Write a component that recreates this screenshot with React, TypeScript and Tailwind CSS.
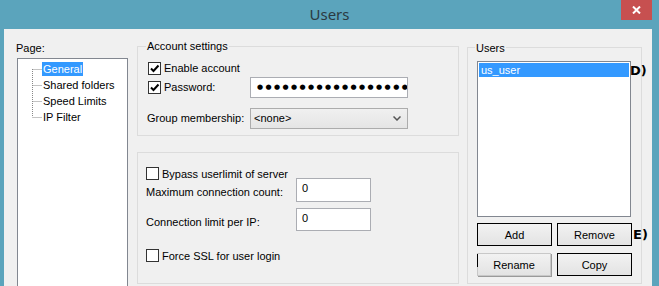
import React from "react";

const font = { fontFamily: '"Liberation Sans", Arial, sans-serif' };
const dots = { fontFamily: '"DejaVu Sans", sans-serif' };

function Check({ checked }: { checked?: boolean }) {
  return (
    <span className="flex h-[13px] w-[13px] shrink-0 items-center justify-center border border-[#333] bg-white">
      {checked && (
        <svg width="11" height="11" viewBox="0 0 11 11">
          <path d="M2 5.5 L4.5 8 L9.5 2.5" fill="none" stroke="#000" strokeWidth="2" />
        </svg>
      )}
    </span>
  );
}

function Btn({ label }: { label: string }) {
  return (
    <div className="flex h-[23px] w-[75px] items-center justify-center border border-black bg-gradient-to-b from-[#f2f2f2] to-[#e3e3e3] text-black">
      {label}
    </div>
  );
}

export default function App() {
  const treeItems = ["General", "Shared folders", "Speed Limits", "IP Filter"];
  return (
    <div
      className="flex h-[286px] w-[659px] flex-col overflow-hidden bg-[#5ba4bc] text-[11px] leading-[16px] text-black"
      style={font}
    >
      {/* title bar */}
      <div className="relative flex h-[29px] shrink-0 items-center justify-center">
        <span className="pb-[1px] text-[15px] text-[#2b3a42]" style={{ fontFamily: '"Noto Sans", sans-serif' }}>
          Users
        </span>
        <div className="absolute right-[7px] top-0 flex h-[20px] w-[31px] items-center justify-center bg-[#c75050]">
          <svg width="9" height="8" viewBox="0 0 9 8">
            <path d="M1 0.5 L8 7.5 M8 0.5 L1 7.5" stroke="#fff" strokeWidth="2" />
          </svg>
        </div>
      </div>

      {/* body */}
      <div className="ml-[4px] flex w-[648px] flex-1 bg-[#f0f0f0]">
        {/* page tree */}
        <div className="flex w-[133px] shrink-0 flex-col pt-[11px]">
          <div className="pl-[12px]">Page:</div>
          <div className="ml-[13px] mt-[2px] h-[240px] w-[111px] border border-[#828790] bg-white pt-[2px]">
            <div className="flex pl-[14px]">
              <svg width="10" height="64" className="shrink-0">
                <path
                  d="M0.5 8 V56 M0.5 8.5 H10 M0.5 24.5 H10 M0.5 40.5 H10 M0.5 56.5 H10"
                  stroke="#888"
                  strokeDasharray="1 1"
                  fill="none"
                />
              </svg>
              <div className="flex flex-col">
                {treeItems.map((t, i) => (
                  <div key={t} className="flex h-[16px] items-center">
                    <span
                      className={
                        i === 0
                          ? "bg-[#3399ff] px-[1px] leading-[14px] text-white"
                          : "px-[1px] leading-[14px]"
                      }
                    >
                      {t}
                    </span>
                  </div>
                ))}
              </div>
            </div>
          </div>
        </div>

        {/* middle column */}
        <div className="flex w-[322px] shrink-0 flex-col pt-[17px]">
          <div className="relative border border-[#dcdcdc] pb-[7px] pl-[10px] pt-[13px]">
            <span className="absolute -top-[9px] left-[8px] bg-[#f0f0f0] px-[1px]">Account settings</span>
            <div className="flex h-[16px] items-center gap-[3px]">
              <Check checked />
              <span>Enable account</span>
            </div>
            <div className="mt-[1px] flex h-[20px] items-center">
              <div className="flex w-[102px] items-center gap-[3px]">
                <Check checked />
                <span>Password:</span>
              </div>
              <div
                className="flex h-[21px] w-[158px] items-center overflow-hidden whitespace-nowrap border border-[#abadb3] bg-white pl-[6px] text-[7px] tracking-[2.4px]"
                style={dots}
              >
                ●●●●●●●●●●●●●●●●●●●●●●●●
              </div>
            </div>
            <div className="mt-[11px] flex h-[20px] items-center">
              <span className="-ml-[1px] w-[103px]">Group membership:</span>
              <div className="flex h-[21px] w-[158px] items-center justify-between border border-[#acacac] bg-gradient-to-b from-[#f0f0f0] to-[#e5e5e5] pl-[3px] pr-[6px]">
                <span>&lt;none&gt;</span>
                <svg width="8" height="5" viewBox="0 0 8 5">
                  <path d="M0.5 0.5 L4 4 L7.5 0.5" fill="none" stroke="#555" strokeWidth="1.5" />
                </svg>
              </div>
            </div>
          </div>

          <div className="mt-[16px] h-[132px] border border-[#dcdcdc] pl-[8px] pt-[14px]">
            <div className="-mb-[2px] flex h-[13px] items-center gap-[3px]">
              <Check />
              <span>Bypass userlimit of server</span>
            </div>
            <div className="flex items-start">
              <span className="w-[150px] pt-[6px]">Maximum connection count:</span>
              <div className="h-[24px] w-[75px] border border-[#abadb3] bg-white pl-[5px] pt-[1px]">0</div>
            </div>
            <div className="mt-[6px] flex items-start">
              <span className="w-[150px] pt-[6px]">Connection limit per IP:</span>
              <div className="h-[23px] w-[75px] border border-[#abadb3] bg-white pl-[5px] pt-[1px]">0</div>
            </div>
            <div className="mt-[18px] flex h-[13px] items-center gap-[3px]">
              <Check />
              <span>Force SSL for user login</span>
            </div>
          </div>
        </div>

        {/* users column */}
        <div className="relative ml-[8px] flex w-[175px] shrink-0 flex-col pt-[18px]">
          <div className="relative h-[237px] border border-[#dcdcdc] pl-[9px] pt-[13px]">
            <span className="absolute -top-[8px] left-[7px] bg-[#f0f0f0] px-[1px]">Users</span>
            <div className="h-[156px] w-[154px] border border-[#828790] bg-white p-[1px]">
              <div className="h-[14px] bg-[#3399ff] pl-[2px] leading-[14px] text-white">us_user</div>
            </div>
            <div className="mt-[6px] flex gap-[5px]">
              <Btn label="Add" />
              <Btn label="Remove" />
            </div>
            <div className="mt-[7px] flex gap-[6px]">
              <div className="relative flex h-[23px] w-[74px] items-center justify-center border border-[#c8c8c8] bg-gradient-to-b from-[#f2f2f2] to-[#e3e3e3] shadow-[1px_1px_0_#9a9a9a]">
                <span className="absolute -left-[1px] top-0 h-[13px] w-[1px] bg-black" />
                Rename
              </div>
              <Btn label="Copy" />
            </div>
          </div>
          <span className="absolute left-[163px] top-[34px] text-[13px] font-bold leading-[16px]" style={dots}>
            D)
          </span>
          <span className="absolute left-[166px] top-[198px] text-[13px] font-bold leading-[16px]" style={dots}>
            E)
          </span>
        </div>
      </div>
    </div>
  );
}
